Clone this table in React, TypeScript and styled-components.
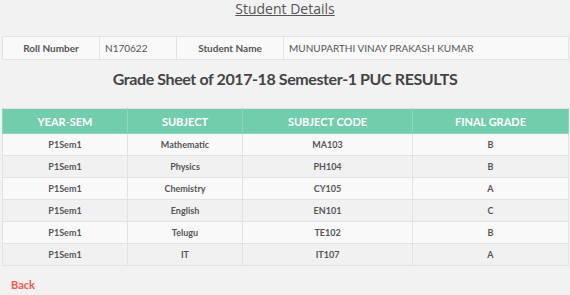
import React from "react";
import styled, { createGlobalStyle } from "styled-components";

const GlobalStyle = createGlobalStyle`
  html, body {
    margin: 0;
    padding: 0;
    background: #f2f2f2;
  }
  body {
    font-family: Lato, "Open Sans", Arial, sans-serif;
    color: #555;
  }
`;

const Page = styled.div`
  padding: 0 2px 0 2px;
`;

const Title = styled.h2`
  margin: 0;
  padding-top: 1px;
  height: 35px;
  text-align: center;
  font-family: "Open Sans", Lato, sans-serif;
  font-weight: 400;
  font-size: 14px;
  line-height: 16px;
  color: #555;
  a {
    color: inherit;
    text-decoration: underline;
  }
`;

const Table = styled.table`
  width: 100%;
  border-collapse: collapse;
  table-layout: fixed;
`;

const InfoCell = styled.td<{ $label?: boolean; $w: number }>`
  box-sizing: border-box;
  width: ${(p) => p.$w}px;
  height: 23px;
  padding: 0 5px;
  border: 1px solid #e2e2e2;
  background: #f9f9f9;
  font-size: 10px;
  font-weight: ${(p) => (p.$label ? 700 : 400)};
  text-align: ${(p) => (p.$label ? "center" : "left")};
  color: #555;
`;

const SheetTitle = styled.h3`
  margin: 0;
  padding: 9px 0 19px;
  line-height: 20px;
  text-align: center;
  font-family: Lato, sans-serif;
  font-weight: 700;
  font-size: 16px;
  letter-spacing: -0.4px;
  color: #444;
`;

const HeadCell = styled.th<{ $w: number }>`
  box-sizing: border-box;
  width: ${(p) => p.$w}px;
  height: 25px;
  padding: 0;
  background: #72cdac;
  color: #fff;
  font-size: 11px;
  font-weight: 700;
  text-align: center;
  border: 1px solid #8ed6bc;
  border-top-color: #e2e2e2;
`;

const Row = styled.tr<{ $odd: boolean }>`
  background: ${(p) => (p.$odd ? "#f9f9f9" : "#f1f1f1")};
`;

const Cell = styled.td`
  height: 21px;
  padding: 0;
  border: 1px solid #e2e2e2;
  text-align: center;
  font-size: 9px;
  font-weight: 700;
  color: #555;
`;

const Footer = styled.div`
  padding: 12px 9px 0;
  font-size: 11px;
  line-height: 13px;
`;

const BackLink = styled.a`
  color: #f2584c;
  font-size: 11px;
  font-weight: 700;
  text-decoration: none;
`;

const grades = [
  ["P1Sem1", "Mathematic", "MA103", "B"],
  ["P1Sem1", "Physics", "PH104", "B"],
  ["P1Sem1", "Chemistry", "CY105", "A"],
  ["P1Sem1", "English", "EN101", "C"],
  ["P1Sem1", "Telugu", "TE102", "B"],
  ["P1Sem1", "IT", "IT107", "A"],
];

const heads: [string, number][] = [
  ["YEAR-SEM", 125],
  ["SUBJECT", 115],
  ["SUBJECT CODE", 170],
  ["FINAL GRADE", 156],
];

export default function App() {
  return (
    <Page>
      <GlobalStyle />
      <Title>
        <a>Student Details</a>
      </Title>
      <Table>
        <tbody>
          <tr>
            <InfoCell $label $w={97}>Roll Number</InfoCell>
            <InfoCell $w={77}>N170622</InfoCell>
            <InfoCell $label $w={107}>Student Name</InfoCell>
            <InfoCell $w={285}>MUNUPARTHI VINAY PRAKASH KUMAR</InfoCell>
          </tr>
        </tbody>
      </Table>
      <SheetTitle>Grade Sheet of 2017-18 Semester-1 PUC RESULTS</SheetTitle>
      <Table>
        <thead>
          <tr>
            {heads.map(([h, w]) => (
              <HeadCell key={h} $w={w}>
                {h}
              </HeadCell>
            ))}
          </tr>
        </thead>
        <tbody>
          {grades.map((g, i) => (
            <Row key={i} $odd={i % 2 === 0}>
              {g.map((v, j) => (
                <Cell key={j}>{v}</Cell>
              ))}
            </Row>
          ))}
        </tbody>
      </Table>
      <Footer>
        <BackLink href="#">Back</BackLink>
      </Footer>
    </Page>
  );
}
